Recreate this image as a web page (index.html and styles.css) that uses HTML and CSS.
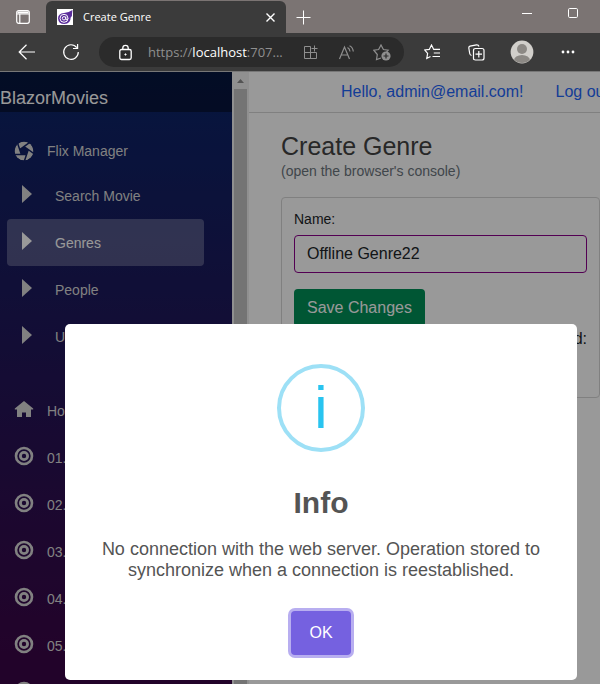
FILE: index.html
```html
<!DOCTYPE html>
<html lang="en">
<head>
<meta charset="utf-8">
<meta name="viewport" content="width=device-width, initial-scale=1">
<title>Create Genre</title>
<link rel="stylesheet" href="styles.css">
</head>
<body>
<svg class="symbols" aria-hidden="true">
  <symbol id="caret" viewBox="0 0 20 20"><path d="M8 1l10 9-10 9z" fill="currentColor"/></symbol>
  <symbol id="target" viewBox="0 0 20 20"><g fill="none" stroke="currentColor"><circle cx="10" cy="10" r="8" stroke-width="2.6"/><circle cx="10" cy="10" r="3.600" stroke-width="2.800"/></g></symbol>
  <symbol id="home" viewBox="0 0 20 20"><path d="M10 2L.8 9.500v.9H3V18h5v-4.500h4V18h5v-7.600h2.200v-.9z" fill="currentColor"/></symbol>
  <symbol id="aperture" viewBox="0 0 20 20">
    <mask id="blades"><circle cx="10" cy="10" r="9.500" fill="#fff"/><path d="M10 5.500l4.300 3.100-1.700 5H7.400l-1.700-5z" fill="#000"/><path d="M10 5.500L20 12.700M14.300 8.600L10.400 20M12.600 13.600H0M7.400 13.600L3 .6M5.700 8.600L17.500.1" stroke="#000" stroke-width="1.500"/></mask>
    <circle cx="10" cy="10" r="9.500" fill="currentColor" mask="url(#blades)"/>
  </symbol>
</svg>

<header class="browser">
  <div class="tabstrip">
    <button class="tab-actions" aria-label="Tab actions"><svg width="14" height="14" viewBox="0 0 14 14" fill="none" stroke="currentColor" stroke-width="1.200"><rect x=".7" y=".7" width="12.600" height="12.600" rx="2"/><path d="M1 4h12M3.800 4v9"/><path d="M1.500 2.500h11" stroke-width="2"/></svg></button>
    <div class="tab">
      <svg class="favicon" width="16" height="16" viewBox="0 0 16 16"><rect width="16" height="16" fill="#fff"/><path d="M15.500 1Q11 4 7 4 1 4.500 1 9.500 1.500 15 7.500 15q6 0 6.200-6.500Q15.500 7 15 5z" fill="#5b2d9b"/><circle cx="7" cy="9.300" r="4" fill="none" stroke="#fff" stroke-width="1"/><circle cx="7" cy="9.300" r="1.700" fill="none" stroke="#fff" stroke-width="1"/><path d="M8.800 7.500v2.800q1 1.300 2-.8" fill="none" stroke="#fff"/></svg>
      <span class="tab-title">Create Genre</span>
      <button class="tab-close" aria-label="Close tab"><svg width="9" height="9" viewBox="0 0 9 9" stroke="currentColor" stroke-width="1.400"><path d="M.5.5l8 8M8.500.5l-8 8"/></svg></button>
    </div>
    <button class="new-tab" aria-label="New tab"><svg width="15" height="15" viewBox="0 0 15 15" stroke="currentColor"><path d="M7.500.5v14M.5 7.500h14"/></svg></button>
    <div class="window-controls">
      <button aria-label="Minimize"><svg width="10" height="10" viewBox="0 0 10 10" stroke="currentColor"><path d="M0 5.500h10"/></svg></button>
      <button aria-label="Maximize"><svg width="10" height="10" viewBox="0 0 10 10" fill="none" stroke="currentColor"><rect x=".5" y=".5" width="9" height="9" rx="1.200"/></svg></button>
    </div>
  </div>
  <div class="toolbar">
    <button class="tool" aria-label="Back"><svg width="18" height="16" viewBox="0 0 18 16" fill="none" stroke="currentColor" stroke-width="1.200"><path d="M8.500.8L1.200 8l7.300 7.200M1.200 8H17"/></svg></button>
    <button class="tool" aria-label="Refresh"><svg width="18" height="18" viewBox="0 0 18 18" fill="none" stroke="currentColor" stroke-width="1.200"><path d="M16.300 9A7.300 7.300 0 1 1 14.800 4.600M15.600 1v4.500H11"/></svg></button>
    <div class="address">
      <button class="site-info" aria-label="Site information"><svg width="13" height="17" viewBox="0 0 13 17" fill="none" stroke="currentColor" stroke-width="1.300"><rect x=".8" y="5.500" width="11.400" height="10" rx="1.700"/><path d="M3.800 5.500V4a2.700 2.700 0 0 1 5.400 0v1.500"/><circle cx="6.500" cy="10.500" r=".7" fill="currentColor" stroke-width=".8"/></svg></button>
      <span class="url">https://<b>localhost</b>:707...</span>
      <button class="page-action" aria-label="App available"><svg width="15" height="15" viewBox="0 0 15 15" fill="none" stroke="currentColor"><path d="M7.500 1.500H1.500v12h12v-6H1.500M7.500 1.500v12M11.500.5v6M8.500 3.500h6"/></svg></button>
      <button class="page-action" aria-label="Read aloud"><svg width="17" height="15" viewBox="0 0 17 15" fill="none" stroke="currentColor" stroke-width="1.200"><path d="M1.500 14L6.500 2l5 12M3.200 10h6.600M9.500 2.500q2.300 1.200 2.500 4M11.500.7q3.400 1.500 3.800 5.800"/></svg></button>
      <button class="page-action" aria-label="Add to favorites"><svg width="18" height="17" viewBox="0 0 18 17" fill="none" stroke="currentColor" stroke-width="1.200"><path d="M8 14l-4.500 1.500.8-5L.8 6.200l4.800-.7L8 1l2.400 4.500 4.800.7-1.700 2"/><circle cx="13" cy="12" r="4.600" fill="currentColor" stroke="none"/><path d="M13 9.500v5M10.500 12h5" stroke="#2b2b2b"/></svg></button>
    </div>
    <button class="tool" aria-label="Favorites"><svg width="17" height="16" viewBox="0 0 17 16" fill="none" stroke="currentColor" stroke-width="1.200"><path d="M6.500 12.500l-3.700 2 .8-5L.8 6l4.500-.6L7.500 1l2.200 4.400H16M9.800 9H16M8.500 12.500H16"/></svg></button>
    <button class="tool" aria-label="Collections"><svg width="17" height="17" viewBox="0 0 17 17" fill="none" stroke="currentColor" stroke-width="1.200"><path d="M3.500 11.500Q2 11 1.700 9.500L.8 4Q.7 2.500 2 2.100L8.500.8Q10.500.6 11 2.500"/><path d="M5.500 14.500V6.500q0-2 2-2H14q2 0 2 2v7.500q0 2-2 2H7.500q-2 0-2-1.500zM10.800 7v6.500M7.500 10.200h6.500"/></svg></button>
    <button class="tool profile" aria-label="Profile"><svg width="24" height="24" viewBox="0 0 24 24"><clipPath id="face"><circle cx="12" cy="12" r="11"/></clipPath><circle cx="12" cy="12" r="11.400" fill="#d1cfcb"/><g fill="#8c8985" clip-path="url(#face)"><circle cx="12" cy="9" r="5"/><ellipse cx="12" cy="20.500" rx="8" ry="5.500"/></g></svg></button>
    <button class="tool" aria-label="Settings and more"><svg width="14" height="4" viewBox="0 0 14 4" fill="currentColor"><circle cx="2" cy="2" r="1.400"/><circle cx="7" cy="2" r="1.400"/><circle cx="12" cy="2" r="1.400"/></svg></button>
  </div>
</header>

<div class="page">
  <aside class="sidebar">
    <div class="brand"><a href="#">BlazorMovies</a></div>
    <nav>
      <a class="group" href="#"><svg><use href="#aperture"/></svg>Flix Manager</a>
      <div class="subnav">
        <a href="#"><svg><use href="#caret"/></svg>Search Movie</a>
        <a class="active" href="#"><svg><use href="#caret"/></svg>Genres</a>
        <a href="#"><svg><use href="#caret"/></svg>People</a>
        <a href="#"><svg><use href="#caret"/></svg>U</a>
      </div>
      <a href="#"><svg><use href="#home"/></svg>Home</a>
      <a href="#"><svg><use href="#target"/></svg>01.</a>
      <a href="#"><svg><use href="#target"/></svg>02.</a>
      <a href="#"><svg><use href="#target"/></svg>03.</a>
      <a href="#"><svg><use href="#target"/></svg>04.</a>
      <a href="#"><svg><use href="#target"/></svg>05.</a>
      <a href="#" aria-label="Next lesson"><svg><use href="#target"/></svg></a>
    </nav>
  </aside>
  <div class="scrollbar" aria-hidden="true">
    <svg width="17" height="17" viewBox="0 0 17 17"><path d="M5 11l3.500-4 3.500 4z" fill="#8b8b8b"/></svg>
    <div class="thumb"></div>
  </div>
  <main>
    <div class="top-row"><a href="#">Hello, admin@email.com!</a><a href="#">Log out</a></div>
    <div class="content">
      <h1>Create Genre</h1>
      <p class="hint">(open the browser's console)</p>
      <form class="card">
        <label for="name">Name:</label>
        <input id="name" type="text" value="Offline Genre22">
        <button class="save" type="button">Save Changes</button>
        <p class="status">d:</p>
      </form>
    </div>
  </main>
  <div class="backdrop">
    <div class="dialog" role="dialog" aria-labelledby="dialog-title">
      <div class="info-icon">i</div>
      <h2 id="dialog-title">Info</h2>
      <p>No connection with the web server. Operation stored to synchronize when a connection is reestablished.</p>
      <button class="ok" type="button">OK</button>
    </div>
  </div>
</div>
</body>
</html>
```
FILE: styles.css
```css
* { box-sizing: border-box; }

body {
  margin: 0;
  height: 100vh;
  display: flex;
  flex-direction: column;
  overflow: hidden;
  font: 16px/24px "Liberation Sans", Arial, sans-serif;
  color: #212529;
  background: #fff;
}

a { text-decoration: none; }
h1, h2, p { margin: 0; }

button {
  font: inherit;
  color: inherit;
  background: none;
  border: 0;
  padding: 0;
}

.symbols {
  position: absolute;
  width: 0;
  height: 0;
}

/* Browser window */
.browser {
  font-family: "Open Sans", "Noto Sans", sans-serif;
  color: #fff;
  background: #3b3b3b;
  border-bottom: 1px solid #777;
}

.browser button {
  display: flex;
  align-items: center;
  justify-content: center;
}

.tabstrip {
  display: flex;
  height: 33px;
  padding-top: 1px;
  background: #7b7473;
}

.tab-actions { width: 46px; }

.tab {
  display: flex;
  align-items: center;
  width: 240px;
  padding: 0 11px;
  gap: 10px;
  background: #3b3b3b;
  border-radius: 6px 6px 0 0;
}

.tab-title {
  flex: 1;
  font-size: 11px;
}

.new-tab { width: 34px; }

.window-controls {
  display: flex;
  height: 24px;
  margin-left: auto;
  padding-right: 4px;
}

.window-controls button { width: 46px; }

.toolbar {
  display: flex;
  align-items: center;
  height: 38px;
  padding: 0 10px 0 5px;
}

.tool { width: 44px; }
.profile { width: 48px; }

.address {
  display: flex;
  align-items: center;
  flex: 1;
  height: 30px;
  margin: 0 6px;
  padding: 0 4px 0 3px;
  background: #2b2b2b;
  border-radius: 15px;
}

.site-info { width: 46px; }

.url {
  flex: 1;
  font-size: 13px;
  color: #8f8f8f;
}

.url b {
  font-weight: 400;
  color: #fff;
}

.browser .page-action {
  width: 36px;
  color: #8f8f8f;
}

/* Page */
.page {
  position: relative;
  display: flex;
  flex: 1;
  min-height: 0;
  overflow: hidden;
}

.sidebar {
  width: 232px;
  font-size: 14px;
  background: linear-gradient(#0a2569, #3a0647 95%);
}

.brand {
  height: 40px;
  padding-top: 14px;
  font-size: 18px;
  background: rgba(0, 0, 0, 0.4);
}

.brand a { color: #fff; }

nav {
  padding: 17px 28px 0 7px;
}

nav a {
  display: flex;
  align-items: center;
  height: 47px;
  padding-left: 7px;
  gap: 13px;
  color: #d7d7d7;
  border-radius: 4px;
}

nav svg {
  width: 20px;
  height: 20px;
  margin-bottom: 4px;
}

nav .group { height: 43px; }
nav .group svg { margin-bottom: 0; }

.subnav { margin-bottom: 27px; }
.subnav a { gap: 21px; }

.subnav .active {
  color: #fff;
  background: rgba(255, 255, 255, 0.25);
}

.scrollbar {
  display: flex;
  flex-direction: column;
  width: 17px;
  background: #f1f1f1;
}

.thumb {
  flex: 1;
  margin: 0 2px;
  background: #c1c1c1;
}

main {
  flex: 1;
  min-width: 0;
}

.top-row {
  display: flex;
  align-items: center;
  gap: 32px;
  height: 41px;
  padding-left: 92px;
  white-space: nowrap;
  overflow: hidden;
  border-bottom: 1px solid #d6d5d5;
}

.top-row a { color: #1f66fb; }

.content { padding: 18px 0 0 32px; }

h1 {
  font-size: 25px;
  font-weight: 400;
  line-height: 30px;
  color: #444;
}

.hint {
  font-size: 14px;
  line-height: 20px;
  color: #6c757d;
}

.card {
  display: flex;
  flex-direction: column;
  align-items: flex-start;
  min-height: 201px;
  margin-top: 16px;
  padding: 11px 12px;
  border: 1px solid #d6d6d6;
  border-radius: 4px;
}

.card label {
  font-size: 14px;
  line-height: 20px;
}

.card input {
  width: 100%;
  height: 38px;
  margin: 6px 0 16px;
  padding: 0 12px;
  font: inherit;
  color: inherit;
  background: #fff;
  border: 1px solid #8b008b;
  border-radius: 4px;
}

.save {
  height: 38px;
  padding: 0 13px;
  color: #fff;
  background: #008f58;
  border-radius: 4px;
}

.status { align-self: flex-end; }

/* Modal */
.backdrop {
  position: absolute;
  inset: 0;
  display: flex;
  align-items: flex-end;
  padding: 0 23px 4px 65px;
  background: rgba(0, 0, 0, 0.4);
}

.dialog {
  display: flex;
  flex-direction: column;
  align-items: center;
  flex: 1;
  padding: 40px 20px 25px;
  text-align: center;
  color: #545454;
  background: #fff;
  border-radius: 5px;
}

.info-icon {
  width: 88px;
  height: 88px;
  font-size: 60px;
  line-height: 80px;
  color: #29c4f0;
  border: 4px solid #9de0f6;
  border-radius: 50%;
}

.dialog h2 {
  margin-top: 33px;
  font-size: 30px;
  line-height: 36px;
}

.dialog p {
  margin-top: 18px;
  font-size: 18px;
  line-height: 21px;
}

.ok {
  width: 60px;
  height: 44px;
  margin-top: 30px;
  color: #fff;
  background: #7561e0;
  border-radius: 4px;
  box-shadow: 0 0 0 3px #b8aef0;
}
```
